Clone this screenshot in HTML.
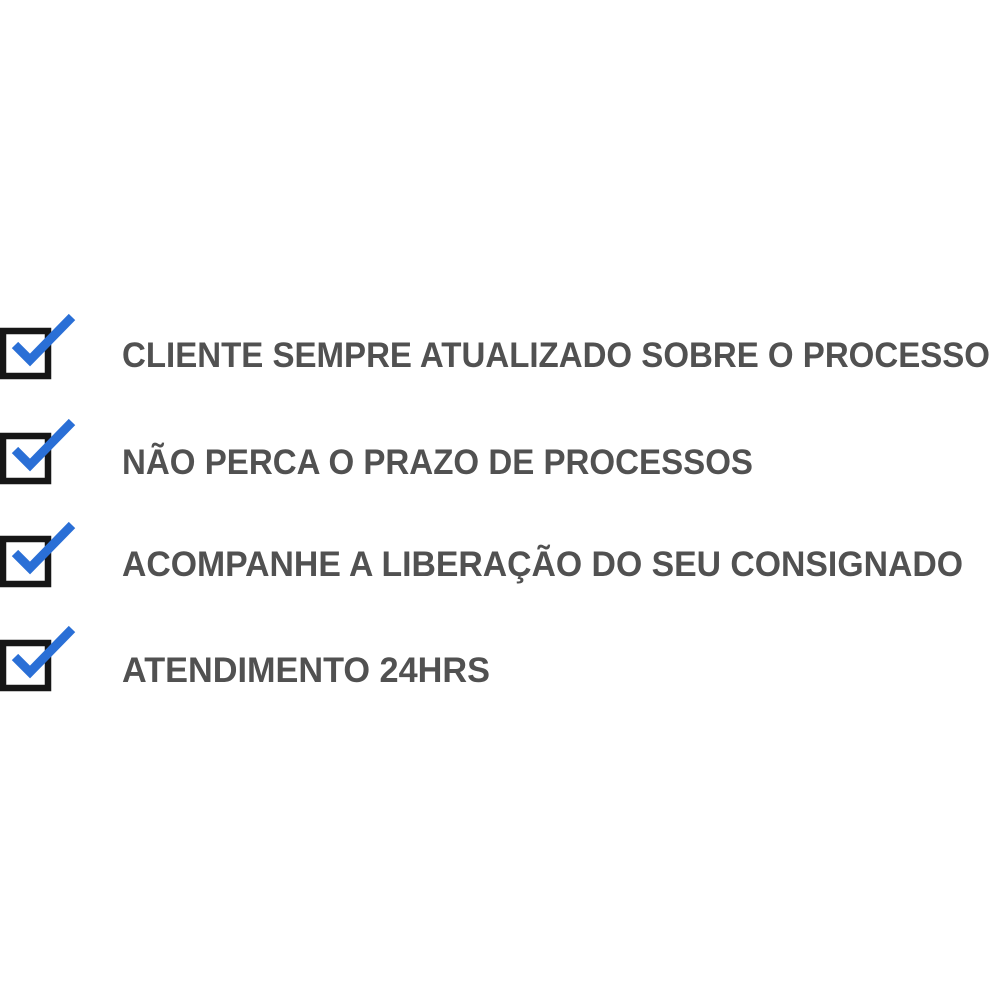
<!DOCTYPE html>
<html><head><style>html,body{margin:0;padding:0;background:#fff;width:1000px;height:1000px;overflow:hidden}</style></head>
<body>
<svg width="1000" height="1000" viewBox="0 0 1000 1000" xmlns="http://www.w3.org/2000/svg">
<defs>
<g id="ic">
<rect x="3" y="3" width="45" height="45" fill="none" stroke="#161616" stroke-width="6.5"/>
<path d="M15 17 L30 32 L72 -11" fill="none" stroke="#2a6fd6" stroke-width="9" stroke-linejoin="miter"/>
</g>
</defs>
<use href="#ic" x="0" y="328"/>
<use href="#ic" x="0" y="433"/>
<use href="#ic" x="0" y="536"/>
<use href="#ic" x="0" y="640"/>
<g font-family="Liberation Sans, sans-serif" font-weight="bold" font-size="35" fill="#515151">
<text x="122" y="367" textLength="868" lengthAdjust="spacingAndGlyphs">CLIENTE SEMPRE ATUALIZADO SOBRE O PROCESSO</text>
<text x="122" y="474" textLength="631" lengthAdjust="spacingAndGlyphs">NÃO PERCA O PRAZO DE PROCESSOS</text>
<text x="122" y="576" textLength="841" lengthAdjust="spacingAndGlyphs">ACOMPANHE A LIBERAÇÃO DO SEU CONSIGNADO</text>
<text x="122" y="682" textLength="368" lengthAdjust="spacingAndGlyphs">ATENDIMENTO 24HRS</text>
</g>
</svg>
</body></html>
